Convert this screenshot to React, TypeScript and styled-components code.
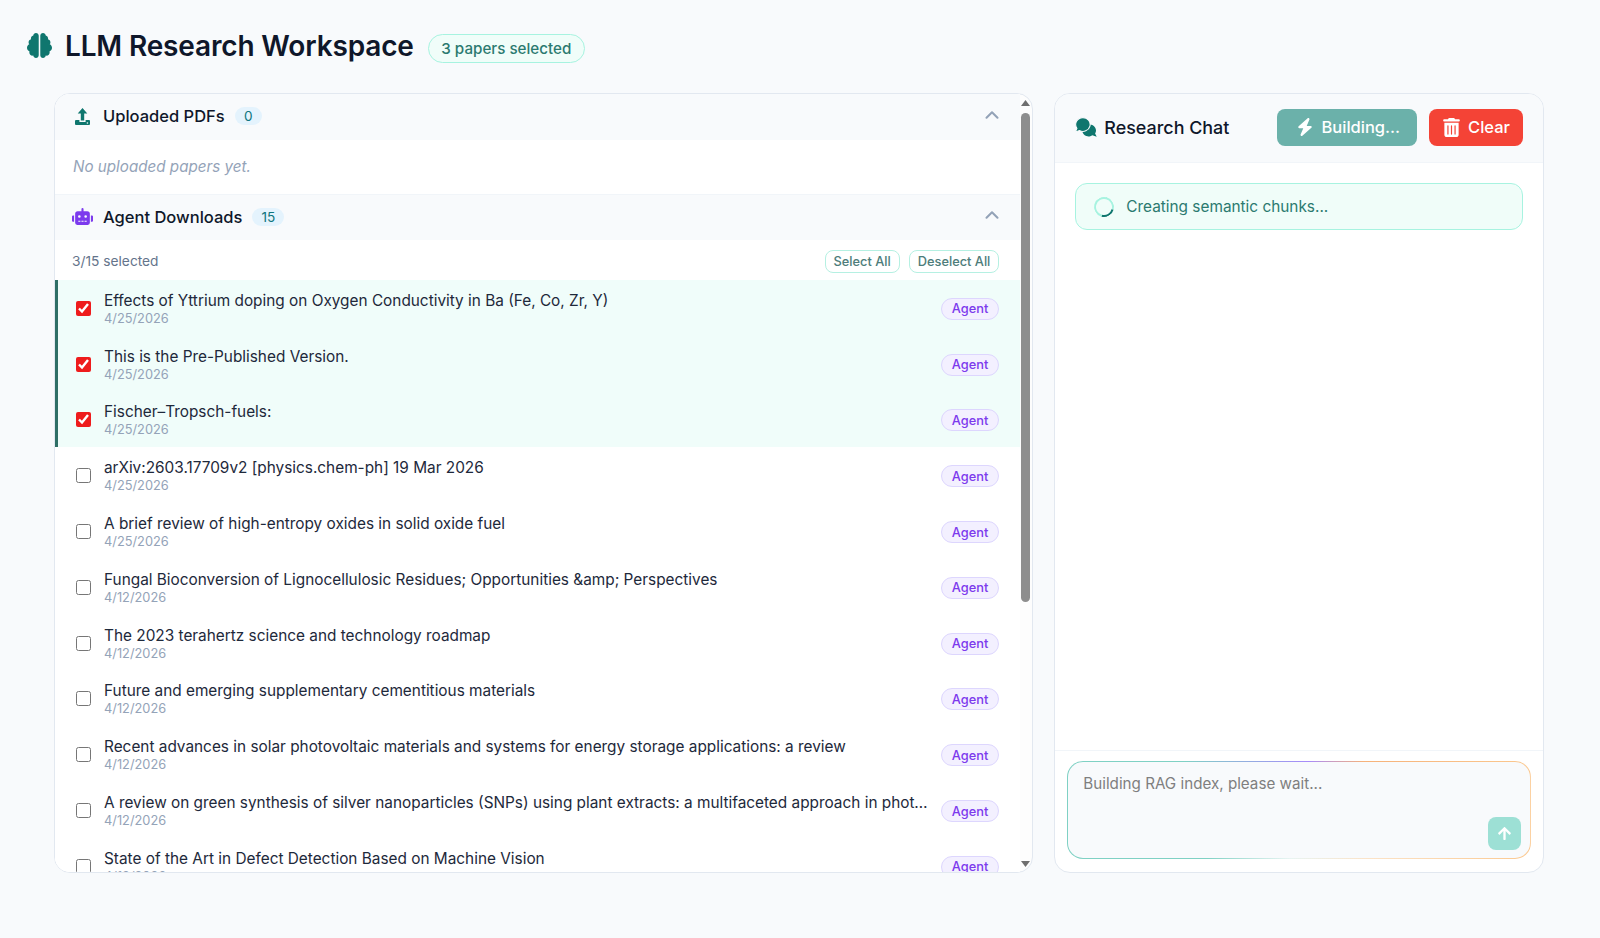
import React from "react";
import styled, { createGlobalStyle } from "styled-components";
import { FaRobot, FaArrowUp } from "react-icons/fa";
import { FaBrain, FaBolt, FaTrashCan } from "react-icons/fa6";
import { LuChevronUp } from "react-icons/lu";

const Global = createGlobalStyle`
  html, body { margin: 0; padding: 0; }
  body { background: #f8fafc; font-family: Inter, "Noto Sans", sans-serif; color: #0f172a; }
  * { box-sizing: border-box; }
`;

const Page = styled.div`
  height: 938px;
  display: flex;
  flex-direction: column;
  overflow: hidden;
`;

const Header = styled.header`
  height: 93px;
  flex: none;
  padding: 0 27px;
  display: flex;
  align-items: center;
  gap: 13px;
`;

const BrainIcon = styled(FaBrain)`
  width: 25px;
  height: 27px;
  color: #0f766e;
  margin-top: -2px;
`;

const Title = styled.h1`
  margin: -2px 1px 0 0;
  font-size: 28px;
  font-weight: 600;
  letter-spacing: -0.15px;
  color: #0f172a;
`;

const PaperChip = styled.span`
  margin-top: 3px;
  height: 29px;
  padding: 0 12.5px;
  display: inline-flex;
  align-items: center;
  border: 1px solid #a7f3e0;
  border-radius: 999px;
  background: #f0fdf9;
  color: #2b7a70;
  font-size: 15.2px;
  font-weight: 500;
`;

const Main = styled.main`
  display: grid;
  grid-template-columns: 2fr 1fr;
  gap: 21px;
  padding: 0 56px 0 54px;
  height: 780px;
`;

const LibraryPanel = styled.section`
  display: flex;
  background: #fdfdfd;
  border: 1px solid #e2e8f0;
  border-radius: 16px;
  overflow: hidden;
`;

const LibraryList = styled.div`
  flex: 1;
  min-width: 0;
  background: #fff;
  overflow: hidden;
`;

const ScrollRail = styled.div`
  width: 12px;
  flex: none;
  padding: 6px 2px 5px 1px;
  display: flex;
  flex-direction: column;
  align-items: center;
  color: #6f6f6f;
`;

const RailArrow = styled.svg<{ $end?: boolean }>`
  width: 9px;
  height: 6px;
  flex: none;
  margin-top: ${(p) => (p.$end ? "auto" : "0")};
`;

const RailThumb = styled.div`
  width: 9px;
  height: 489px;
  margin-top: 7px;
  flex: none;
  border-radius: 5px;
  background: #8e8e8e;
`;

const SectionHead = styled.div<{ $h: number }>`
  height: ${(p) => p.$h}px;
  padding: 0 17px 2px 17px;
  display: flex;
  align-items: center;
  background: #f8fafc;
`;

const SectionIcon = styled.span<{ $color: string }>`
  width: 21px;
  margin-right: 10px;
  display: inline-flex;
  justify-content: center;
  color: ${(p) => p.$color};
  font-size: 21px;
`;

const SectionTitle = styled.span`
  font-size: 16.5px;
  font-weight: 500;
  color: #0f172a;
`;

const CountChip = styled.span`
  margin-left: 10px;
  height: 18px;
  min-width: 27px;
  padding: 0 9px;
  display: inline-flex;
  align-items: center;
  justify-content: center;
  border-radius: 999px;
  background: #e4f3fd;
  color: #0f7680;
  font-size: 13.6px;
`;

const Chevron = styled(LuChevronUp)`
  margin-left: auto;
  margin-top: -3px;
  width: 22px;
  height: 22px;
  stroke-width: 2.3;
  color: #94a3b8;
`;

const EmptyNote = styled.div`
  height: 55px;
  padding: 0 18px 2px;
  display: flex;
  align-items: center;
  font-size: 15.2px;
  font-style: italic;
  color: #94a3b8;
  border-bottom: 1px solid #f1f5f9;
`;

const Toolbar = styled.div`
  height: 40px;
  padding: 2px 21px 0 17px;
  display: flex;
  align-items: center;
  gap: 9px;
`;

const SelectedCount = styled.span`
  margin-right: auto;
  font-size: 13.76px;
  color: #64748b;
`;

const ToolButton = styled.button`
  height: 23px;
  padding: 0 8px;
  border: 1.5px solid #b5f0e2;
  border-radius: 8px;
  background: #fff;
  color: #4d7c7a;
  font: 500 12.8px Inter, sans-serif;
`;

const Row = styled.label<{ $selected?: boolean }>`
  height: 55.8px;
  padding: 0 21px 0 ${(p) => (p.$selected ? "18px" : "21px")};
  display: flex;
  align-items: center;
  background: ${(p) => (p.$selected ? "#f0fdfa" : "#fff")};
  border-left: ${(p) => (p.$selected ? "3px solid #2f6f66" : "0")};
`;

const Check = styled.input`
  width: 15px;
  height: 15px;
  margin: 1px 13px 0 0;
  flex: none;
  accent-color: #ee1c1c;
`;

const RowText = styled.div`
  flex: 1;
  min-width: 0;
  margin-top: 2px;
  display: flex;
  flex-direction: column;
`;

const RowTitle = styled.span`
  font-size: 15.36px;
  line-height: 20px;
  color: #1e293b;
  white-space: nowrap;
  overflow: hidden;
  text-overflow: ellipsis;
`;

const RowDate = styled.span`
  font-size: 12.8px;
  line-height: 16px;
  color: #94a3b8;
`;

const AgentBadge = styled.span`
  margin: 2px 0 0 11px;
  flex: none;
  height: 22px;
  padding: 0 10px;
  display: inline-flex;
  align-items: center;
  border: 1px solid #ddd6fe;
  border-radius: 999px;
  background: #f3f0ff;
  color: #7c3aed;
  font-size: 12.8px;
  font-weight: 500;
`;

const ChatPanel = styled.section`
  background: #fff;
  border: 1px solid #e2e8f0;
  border-radius: 16px;
  overflow: hidden;
  display: flex;
  flex-direction: column;
`;

const ChatHead = styled.div`
  height: 69px;
  flex: none;
  padding: 0 20px 2px;
  display: flex;
  align-items: center;
  gap: 12px;
  background: #f8fafc;
  border-bottom: 1px solid #f1f5f9;
`;

const ChatTitle = styled.div`
  margin-right: auto;
  display: flex;
  align-items: center;
  gap: 7px;
  font-size: 17.92px;
  font-weight: 500;
  color: #0f172a;
`;

const ChatIcon = styled.svg`
  width: 22px;
  height: 20px;
  color: #0f766e;
`;

const ActionButton = styled.button<{ $tone: "teal" | "red" }>`
  height: 37px;
  padding: ${(p) => (p.$tone === "teal" ? "0 17px 0 19px" : "0 13px 0 13px")};
  display: inline-flex;
  align-items: center;
  gap: ${(p) => (p.$tone === "teal" ? "8px" : "7px")};
  border: 0;
  border-radius: 8px;
  background: ${(p) => (p.$tone === "teal" ? "#6bb1aa" : "#f44336")};
  color: #fff;
  font: 500 16.5px Inter, sans-serif;

  svg { width: ${(p) => (p.$tone === "teal" ? "18px" : "19px")}; height: ${(p) => (p.$tone === "teal" ? "18px" : "19px")}; }
`;

const ChatBody = styled.div`
  flex: 1;
  padding: 20px 20px 0;
`;

const Status = styled.div`
  height: 47px;
  padding: 0 18px;
  display: flex;
  align-items: center;
  gap: 12px;
  border: 1px solid #a7f3e0;
  border-radius: 12px;
  background: #f0fdf9;
  color: #2b7a70;
  font-size: 15.36px;
`;

const Spinner = styled.span`
  width: 20px;
  height: 20px;
  border-radius: 50%;
  border: 2.5px solid #a7f3e0;
  border-bottom-color: #0f766e;
  transform: rotate(-30deg);
`;

const InputArea = styled.div`
  height: 122px;
  flex: none;
  padding: 10px 12px 14px 12px;
  border-top: 1px solid #f1f5f9;
`;

const GradientBorder = styled.div`
  height: 98px;
  padding: 1px;
  border-radius: 16px;
  background:
    linear-gradient(90deg, #7fd1c4 0%, #7fd1c4 30%, #e8f4f2 48%, #fbe3c8 65%, #fbc88f 100%) bottom / 100% 50% no-repeat,
    linear-gradient(90deg, #7fd1c4 0%, #7fd1c4 25%, #a78bfa 52%, #f6b27a 64%, #fbc88f 100%) top / 100% 50% no-repeat;
`;

const Composer = styled.div`
  position: relative;
  height: 100%;
  border-radius: 15px;
  background: #f8fafc;
  padding: 12px 15px;
  font-size: 15.2px;
  color: #7f7f7f;
`;

const SendButton = styled.button`
  position: absolute;
  right: 9px;
  bottom: 8px;
  width: 33px;
  height: 33px;
  display: flex;
  align-items: center;
  justify-content: center;
  border: 0;
  border-radius: 8px;
  background: #9de0d5;
  color: #fff;
  svg { width: 15px; height: 15px; }
`;

const UploadGlyph = () => (
  <svg width="15" height="17" viewBox="0 0 15 17" fill="currentColor">
    <path d="M7.5 0 L12.3 5.6 H9.2 V12.6 H5.8 V5.6 H2.7 Z" />
    <path d="M1 12 H4.4 V14 H10.6 V12 H14 A1 1 0 0 1 15 13 V16 A1 1 0 0 1 14 17 H1 A1 1 0 0 1 0 16 V13 A1 1 0 0 1 1 12 Z" />
    <circle cx="12.4" cy="15" r=".8" fill="#f8fafc" />
  </svg>
);

const papers = [
  ["Effects of Yttrium doping on Oxygen Conductivity in Ba (Fe, Co, Zr, Y)", "4/25/2026", true],
  ["This is the Pre-Published Version.", "4/25/2026", true],
  ["Fischer–Tropsch-fuels:", "4/25/2026", true],
  ["arXiv:2603.17709v2 [physics.chem-ph] 19 Mar 2026", "4/25/2026", false],
  ["A brief review of high-entropy oxides in solid oxide fuel", "4/25/2026", false],
  ["Fungal Bioconversion of Lignocellulosic Residues; Opportunities &amp; Perspectives", "4/12/2026", false],
  ["The 2023 terahertz science and technology roadmap", "4/12/2026", false],
  ["Future and emerging supplementary cementitious materials", "4/12/2026", false],
  ["Recent advances in solar photovoltaic materials and systems for energy storage applications: a review", "4/12/2026", false],
  ["A review on green synthesis of silver nanoparticles (SNPs) using plant extracts: a multifaceted approach in photocatalysis", "4/12/2026", false],
  ["State of the Art in Defect Detection Based on Machine Vision", "4/12/2026", false],
] as const;

export default function App() {
  return (
    <Page>
      <Global />
      <Header>
        <BrainIcon />
        <Title>LLM Research Workspace</Title>
        <PaperChip>3 papers selected</PaperChip>
      </Header>
      <Main>
        <LibraryPanel>
          <LibraryList>
            <SectionHead $h={46}>
              <SectionIcon $color="#0f766e"><UploadGlyph /></SectionIcon>
              <SectionTitle>Uploaded PDFs</SectionTitle>
              <CountChip>0</CountChip>
              <Chevron />
            </SectionHead>
            <EmptyNote>No uploaded papers yet.</EmptyNote>
            <SectionHead $h={45}>
              <SectionIcon $color="#7c3aed"><FaRobot /></SectionIcon>
              <SectionTitle>Agent Downloads</SectionTitle>
              <CountChip>15</CountChip>
              <Chevron />
            </SectionHead>
            <Toolbar>
              <SelectedCount>3/15 selected</SelectedCount>
              <ToolButton>Select All</ToolButton>
              <ToolButton>Deselect All</ToolButton>
            </Toolbar>
            {papers.map(([title, date, selected]) => (
              <Row key={title} $selected={selected}>
                <Check type="checkbox" defaultChecked={selected} />
                <RowText>
                  <RowTitle>{title}</RowTitle>
                  <RowDate>{date}</RowDate>
                </RowText>
                <AgentBadge>Agent</AgentBadge>
              </Row>
            ))}
          </LibraryList>
          <ScrollRail aria-hidden="true">
            <RailArrow viewBox="0 0 9 6" fill="currentColor"><path d="M4.5 0 L9 6 H0 Z" /></RailArrow>
            <RailThumb />
            <RailArrow $end viewBox="0 0 9 6" fill="currentColor"><path d="M0 0 H9 L4.5 6 Z" /></RailArrow>
          </ScrollRail>
        </LibraryPanel>
        <ChatPanel>
          <ChatHead>
            <ChatTitle>
              <ChatIcon viewBox="0 0 22 20" fill="currentColor">
                <path d="M14.5 7.5 a6.3 6 0 0 1 5.6 9 l1.6 3.2 -4.4 -1.4 a6.3 6 0 1 1 -2.8 -10.8 Z" />
                <path d="M7.8 0.6 a7.2 6.9 0 1 1 -3.4 12.9 L0.4 15 l1.5 -3.7 A7.2 6.9 0 0 1 7.8 0.6 Z" stroke="#f8fafc" strokeWidth="1.1" />
              </ChatIcon>
              Research Chat
            </ChatTitle>
            <ActionButton $tone="teal"><FaBolt />Building...</ActionButton>
            <ActionButton $tone="red"><FaTrashCan />Clear</ActionButton>
          </ChatHead>
          <ChatBody>
            <Status><Spinner />Creating semantic chunks...</Status>
          </ChatBody>
          <InputArea>
            <GradientBorder>
              <Composer>
                Building RAG index, please wait...
                <SendButton><FaArrowUp /></SendButton>
              </Composer>
            </GradientBorder>
          </InputArea>
        </ChatPanel>
      </Main>
    </Page>
  );
}
